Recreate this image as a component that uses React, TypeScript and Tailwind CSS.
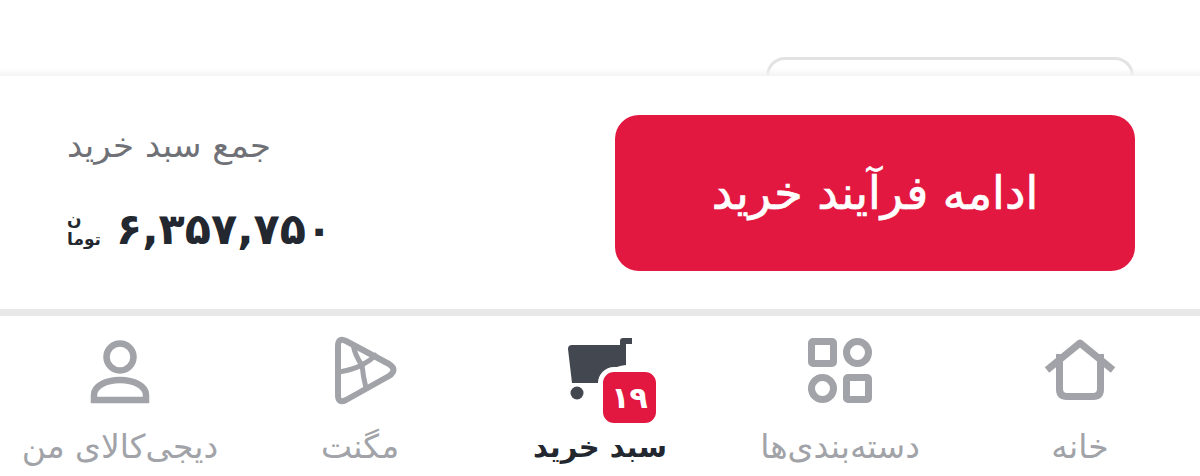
import React from 'react';

const gray = '#a1a3a8';

const HomeIcon = () => (
  <svg width="80" height="72" viewBox="1040 335 80 72" fill="none" stroke={gray} strokeWidth="7">
    <path d="M1047 370 L1080 343 L1113 370" strokeLinejoin="round" />
    <path d="M1059.5 354 V389 Q1059.5 396.500 1067 396.500 H1093 Q1100.500 396.500 1100.500 389 V354" />
  </svg>
);

const CategoryIcon = () => (
  <svg width="80" height="72" viewBox="800 335 80 72" fill="none" stroke={gray} strokeWidth="7">
    <rect x="811.5" y="341.5" width="22" height="22" rx="1.5" />
    <circle cx="857.5" cy="352.5" r="11" />
    <circle cx="822.5" cy="388.5" r="11" />
    <rect x="846.5" y="377.5" width="22" height="22" rx="1.5" />
  </svg>
);

const CartIcon = () => (
  <svg width="80" height="72" viewBox="560 335 80 72">
    <path
      d="M620 341 Q620 338 623 338 H632 V344 H626 V365 Q606 367 598 383 H572 L568 349 Q568 345 572 345 H620 Z"
      fill="#424750"
    />
    <circle cx="577" cy="393" r="6.5" fill="#424750" />
  </svg>
);

const MagnetIcon = () => (
  <svg width="80" height="72" viewBox="320 335 80 72" fill="none" stroke={gray} strokeWidth="6" strokeLinejoin="round">
    <path d="M338 346 Q338 337 346 341 L389 364 Q398 370 389 376 L346 400 Q338 404 338 395 Z" />
    <path d="M339 372 Q352 370 362 365 Q370 361 377 354" strokeWidth="5" />
    <path d="M353 344 Q355 356 362 365 Q363 376 366 388" strokeWidth="5" />
  </svg>
);

const UserIcon = () => (
  <svg width="80" height="72" viewBox="80 335 80 72" fill="none" stroke={gray} strokeWidth="6.5">
    <circle cx="120" cy="357" r="13.5" />
    <path d="M94 400 V395 C94 386 106 380 120 380 C134 380 146 386 146 395 V400 Z" />
  </svg>
);

const navItems = [
  { label: 'خانه', icon: <HomeIcon /> },
  { label: 'دسته‌بندی‌ها', icon: <CategoryIcon /> },
  { label: 'سبد خرید', icon: <CartIcon />, active: true },
  { label: 'مگنت', icon: <MagnetIcon /> },
  { label: 'دیجی‌کالای من', icon: <UserIcon /> },
];

export default function App() {
  return (
    <div className="w-[1200px] h-[476px] overflow-hidden bg-white font-['DejaVu_Sans',sans-serif]">
      {/* peek of the card behind the sheet */}
      <div className="relative h-[76px] flex justify-end items-end pr-[66px]">
        <div className="w-[368px] h-[19px] border-[3px] border-b-0 border-[#e3e3e3] rounded-t-[26px]" />
        <div className="absolute left-0 right-0 bottom-0 h-[8px] bg-gradient-to-b from-transparent to-[#f3f3f3]" />
      </div>

      <div className="h-[233px] flex items-start justify-between pl-[67px] pr-[65px] pt-[39px]">
        <div className="flex flex-col items-start pt-[7px]">
          <div dir="rtl" className="text-[34px] leading-[46px] text-[#6f7177]">
            جمع سبد خرید
          </div>
          <div className="flex items-center gap-[15px] mt-[36px]">
            <div dir="rtl" className="text-left text-[17px] leading-[20px] font-bold text-[#23272f]">
              ن
              <br />
              توما
            </div>
            <span className="text-[43px] leading-[50px] font-bold text-[#23272f]">۶,۳۵۷,۷۵۰</span>
          </div>
        </div>
        <button
          dir="rtl"
          className="w-[520px] h-[156px] rounded-[24px] bg-[#e31840] text-white text-[46px] [-webkit-text-stroke:0.7px_white] flex items-center justify-center"
        >
          ادامه فرآیند خرید
        </button>
      </div>

      <div className="h-[7px] bg-[#e8e8e8]" />

      <nav dir="rtl" className="grid grid-cols-5 pt-[19px]">
        {navItems.map((item) => (
          <div key={item.label} className="relative flex flex-col items-center">
            {item.icon}
            {item.active && (
              <span
                dir="ltr"
                className="absolute left-[118px] top-[32px] w-[63px] h-[61px] flex items-center justify-center rounded-[16px] border-[5px] border-white bg-[#e31840] text-white text-[30px] tracking-[-2px] font-bold"
              >
                ۱۹
              </span>
            )}
            <span
              className={
                item.active
                  ? 'mt-[19px] text-[29px] leading-[42px] whitespace-nowrap font-bold text-[#23272f]'
                  : 'mt-[19px] text-[33px] leading-[42px] whitespace-nowrap text-[#a1a3a8]'
              }
            >
              {item.label}
            </span>
          </div>
        ))}
      </nav>
    </div>
  );
}
